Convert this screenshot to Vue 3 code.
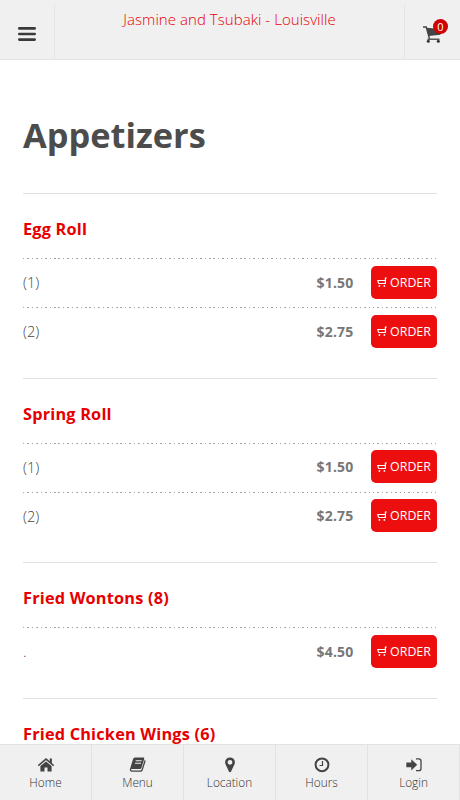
<template>
  <div class="app">
    <header class="topbar">
      <button class="menu-btn" aria-label="Menu">
        <svg width="18" height="16" viewBox="0 0 18 16">
          <path d="M1.3 2.4h15.4M1.3 8h15.4M1.3 13.6h15.4" stroke="#3a3a3a" stroke-width="2.6" stroke-linecap="round" />
        </svg>
      </button>
      <div class="restaurant">Jasmine and Tsubaki - Louisville</div>
      <button class="cart-btn" aria-label="Cart">
        <svg width="18" height="17" viewBox="0 0 18 17">
          <path d="M0 1h3.2l3.3 11.7" fill="none" stroke="#444" stroke-width="1.4" />
          <path d="M3.5 1.7L17.5 3v5.7L5.6 10z" fill="#444" />
          <circle cx="5.3" cy="15.2" r="1.5" fill="#333" />
          <circle cx="15.3" cy="15.2" r="1.5" fill="#333" />
          <path d="M4.5 13.2h12" stroke="#333" stroke-width="1.2" />
        </svg>
        <span class="badge">{{ cartCount }}</span>
      </button>
    </header>

    <main class="content">
      <h1>Appetizers</h1>
      <section v-for="item in items" :key="item.name" class="item">
        <h2>{{ item.name }}</h2>
        <div v-for="option in item.options" :key="option.label" class="option">
          <span class="label">{{ option.label }}</span>
          <span class="price">{{ option.price }}</span>
          <button class="order-btn">
            <svg width="10" height="10" viewBox="0 0 10 10">
              <path d="M9.8 1H8.4V6.5H1.6" fill="none" stroke="#fff" stroke-width="1.2" />
              <path d="M8.4 3.5H.8l.8 3" fill="none" stroke="#fff" stroke-width="1.1" />
              <circle cx="2.4" cy="8.9" r=".9" fill="#fff" />
              <circle cx="7.4" cy="8.9" r=".9" fill="#fff" />
            </svg>
            <span>ORDER</span>
          </button>
        </div>
      </section>
    </main>

    <nav class="tabs">
      <a v-for="tab in tabs" :key="tab.label" class="tab">
        <svg width="18" height="18" viewBox="0 0 18 18">
          <template v-if="tab.icon === 'home'">
            <path d="M1.3 9.6L9 3.1l7.7 6.5" fill="none" stroke="#444" stroke-width="1.5" />
            <path d="M12.7 2.6h2.2v4.9l-2.2-1.9z" fill="#444" />
            <path d="M3.4 10.1L9 5.5l5.6 4.6v5.3h-4.1v-4h-3v4H3.4z" fill="#444" />
          </template>
          <template v-else-if="tab.icon === 'book'">
            <path d="M5.9 1.6h8.3q1.4 0 1 1.4l-2.8 9q-.3 1-1.4 1H2.6q-.8 0-.6.8.2.6 1 .6h8.6q.8 0 1-.8l3-9.7q1.3.5.9 1.7l-2.8 8.6q-.5 1.6-1.9 1.6H3q-2.7-.2-2.1-2.5L4 3.2q.5-1.6 1.9-1.6z" fill="#444" />
            <path d="M6.7 4.7h6M6 7.2h6" stroke="#f0f0f0" stroke-width="1.1" />
          </template>
          <path
            v-else-if="tab.icon === 'pin'"
            d="M9 1.4a4.9 4.9 0 0 1 4.9 4.9q0 1.1-.4 2l-3.4 7.2q-.3.7-1.1.7t-1.1-.7L4.5 8.3q-.4-.9-.4-2A4.9 4.9 0 0 1 9 1.4zm0 2.5a2.4 2.4 0 1 0 0 4.8 2.4 2.4 0 0 0 0-4.8z"
            fill="#444"
          />
          <template v-else-if="tab.icon === 'clock'">
            <circle cx="9" cy="8.8" r="6.4" fill="none" stroke="#444" stroke-width="2" />
            <path d="M9.5 4.9v4.6H6.5" fill="none" stroke="#444" stroke-width="1.2" />
          </template>
          <template v-else>
            <path d="M1.3 6.4h5V3.2L12.2 8.8l-5.9 5.6v-3.2h-5z" fill="#444" />
            <path d="M11 2.9h2.7q2.3 0 2.3 2.2v7.4q0 2.2-2.3 2.2H11" fill="none" stroke="#444" stroke-width="1.3" />
          </template>
        </svg>
        <span>{{ tab.label }}</span>
      </a>
    </nav>
  </div>
</template>

<script setup>
import { ref } from 'vue'

const cartCount = ref(0)

const items = [
  {
    name: 'Egg Roll',
    options: [
      { label: '(1)', price: '$1.50' },
      { label: '(2)', price: '$2.75' }
    ]
  },
  {
    name: 'Spring Roll',
    options: [
      { label: '(1)', price: '$1.50' },
      { label: '(2)', price: '$2.75' }
    ]
  },
  {
    name: 'Fried Wontons (8)',
    options: [{ label: '.', price: '$4.50' }]
  },
  {
    name: 'Fried Chicken Wings (6)',
    options: []
  }
]

const tabs = [
  { label: 'Home', icon: 'home' },
  { label: 'Menu', icon: 'book' },
  { label: 'Location', icon: 'pin' },
  { label: 'Hours', icon: 'clock' },
  { label: 'Login', icon: 'login' }
]
</script>

<style>
body {
  margin: 0;
  background: #fff;
}
</style>

<style scoped>
.app {
  display: flex;
  flex-direction: column;
  width: 460px;
  height: 800px;
  overflow: hidden;
  background: #fff;
  font-family: "Open Sans", "Noto Sans", sans-serif;
  color: #555;
}

button {
  border: 0;
  background: none;
  padding: 0;
  font-family: inherit;
}

.topbar {
  display: flex;
  flex: none;
  box-sizing: border-box;
  height: 60px;
  background: #f0f0f0;
  border-bottom: 1px solid #e2e2e2;
}

.menu-btn,
.cart-btn {
  display: flex;
  align-items: center;
  justify-content: center;
  box-sizing: border-box;
  width: 55px;
  margin-top: 4px;
}

.menu-btn {
  border-right: 1px solid #e5e5e5;
}

.menu-btn svg {
  margin-top: 5px;
}

.cart-btn {
  position: relative;
  width: 56px;
  border-left: 1px solid #e5e5e5;
}

.cart-btn svg {
  margin: 6px 1px 0 0;
}

.badge {
  position: absolute;
  top: 15px;
  right: 12px;
  width: 15px;
  height: 15px;
  border-radius: 50%;
  background: #d00000;
  color: #fff;
  font-size: 11px;
  line-height: 15px;
  text-align: center;
}

.restaurant {
  flex: 1;
  padding-top: 9px;
  color: #e60000;
  font-size: 15px;
  font-weight: 300;
  letter-spacing: 0.05px;
  line-height: 20px;
  text-align: center;
}

.content {
  flex: 1;
  min-height: 0;
  overflow: hidden;
  padding: 0 23px;
}

h1 {
  margin: 0;
  padding: 51px 0 58px;
  height: 24px;
  color: #4c4c4c;
  font-size: 34.4px;
  line-height: 48px;
  font-weight: 700;
}

.item {
  border-top: 1px solid #e0e0e0;
  padding-bottom: 21.6px;
}

h2 {
  margin: 0;
  height: 64px;
  color: #e60000;
  font-size: 16.3px;
  letter-spacing: 0.2px;
  line-height: 70px;
  font-weight: 700;
}

.option {
  display: flex;
  align-items: center;
  box-sizing: border-box;
  height: 49px;
  padding-bottom: 1px;
  background: repeating-linear-gradient(90deg, #a4a4a4 0 1.5px, transparent 1.5px 4.43px) top / 100% 1px no-repeat;
}

.label {
  flex: 1;
  color: #444;
  font-size: 14.6px;
  font-weight: 300;
}

.price {
  margin-right: 17.5px;
  color: #777;
  font-size: 14px;
  letter-spacing: 0.2px;
  font-weight: 700;
}

.order-btn {
  display: flex;
  align-items: center;
  justify-content: center;
  gap: 3px;
  width: 66px;
  height: 33px;
  border-radius: 5px;
  background: #ed0f0f;
  color: #fff;
  font-size: 12.4px;
}

.tabs {
  display: flex;
  flex: none;
  box-sizing: border-box;
  height: 56px;
  background: #f0f0f0;
  border-top: 1px solid #e2e2e2;
}

.tab {
  display: flex;
  flex: 1;
  flex-direction: column;
  align-items: center;
  box-sizing: border-box;
  padding-top: 11px;
  border-right: 1px solid #e2e2e2;
  color: #333;
  font-size: 11.8px;
  font-weight: 300;
  line-height: 16px;
}
</style>
